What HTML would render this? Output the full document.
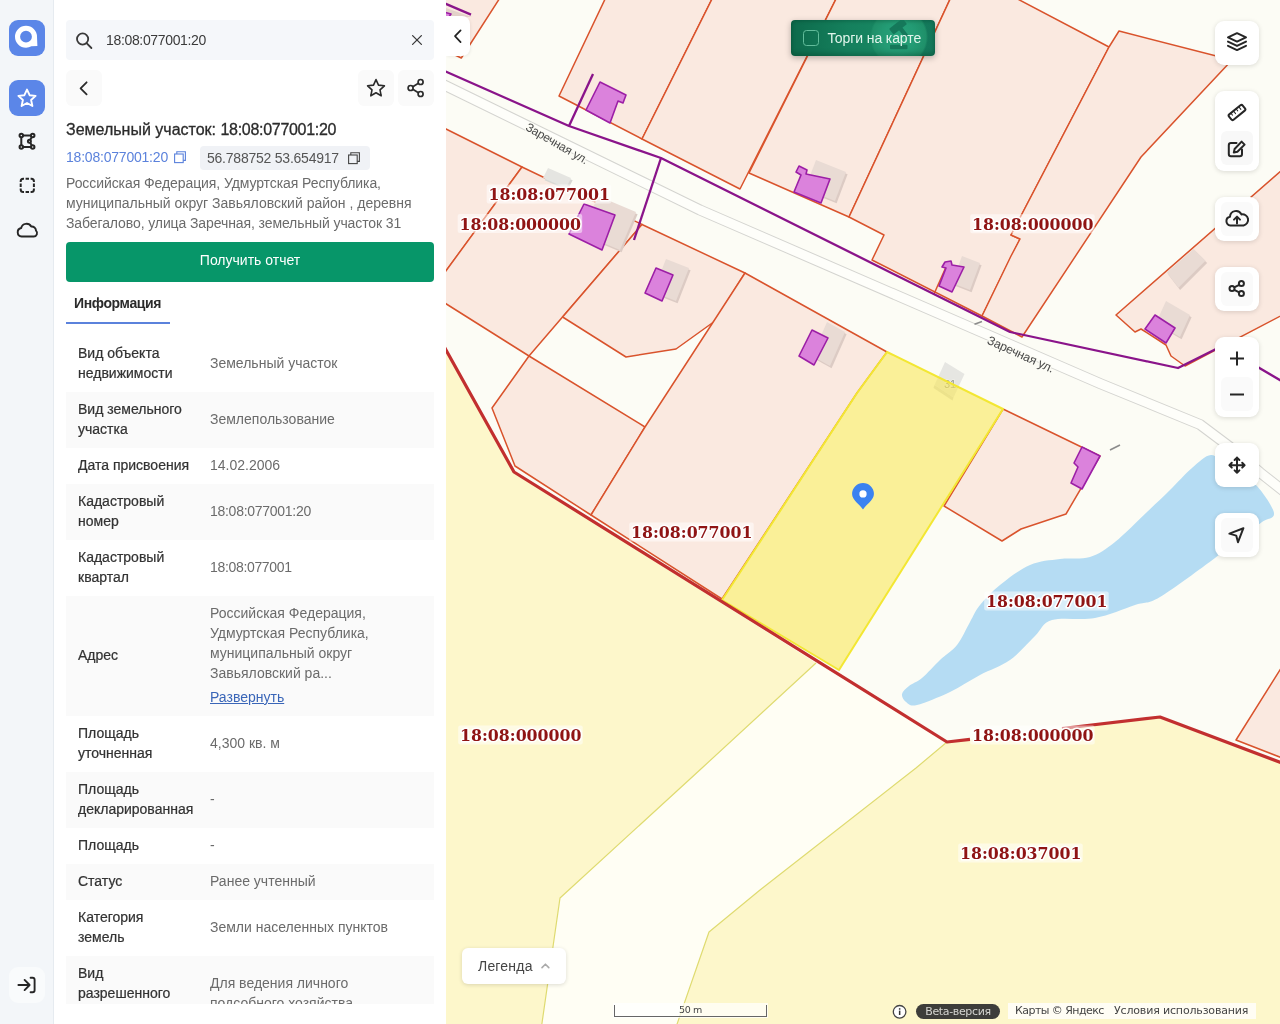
<!DOCTYPE html>
<html lang="ru">
<head>
<meta charset="utf-8">
<title>Земельный участок: 18:08:077001:20</title>
<style>
*{box-sizing:border-box;margin:0;padding:0}
html,body{width:1280px;height:1024px;overflow:hidden;background:#fff}
body{font-family:"Liberation Sans",sans-serif;font-size:14px;color:#333;position:relative}
.abs{position:absolute}
.gl{position:absolute;left:0;top:0;width:100%;height:100%;will-change:transform}
/* ---------- left rail ---------- */
#rail{position:absolute;left:0;top:0;width:54px;height:1024px;background:#f3f6f9;border-right:1px solid #e6ebf0}
.rbtn{position:absolute;left:9px;width:36px;height:36px;border-radius:9px}
.rbtn.blue{background:#5b86e8}
.rbtn svg{position:absolute;left:0;top:0}
/* ---------- panel ---------- */
#panel{position:absolute;left:54px;top:0;width:392px;height:1024px;background:#fff;overflow:hidden}
#search{position:absolute;left:12px;top:20px;width:368px;height:40px;background:#f5f7fa;border-radius:4px}
#search .q{position:absolute;left:40px;top:0;line-height:40px;font-size:14px;color:#3a3a3a;white-space:nowrap}
.sq{position:absolute;width:36px;height:36px;border-radius:6px;background:#fafafa}
.t{position:absolute;white-space:nowrap;transform-origin:0 50%}
#title{left:12px;top:119.5px;font-size:16px;line-height:20px;color:#2b2b2b;font-weight:normal;-webkit-text-stroke:.3px #2b2b2b}
#cn{left:12px;top:147px;line-height:20px;color:#5b82dc}
#chip{position:absolute;left:146px;top:146px;width:170px;height:24px;background:#f0f2f6;border-radius:4px}
#chip .t{left:7px;top:2px;line-height:20px;color:#555}
.addr{left:12px;color:#6b6b6b;line-height:20px}
#get{position:absolute;left:12px;top:242px;width:368px;height:40px;background:#079669;border-radius:4px;color:#fff;text-align:center;line-height:36px;font-size:14px}
#tab{letter-spacing:-.38px;left:20px;top:293px;line-height:20px;font-weight:bold;color:#2b2b2b}
#tabline{position:absolute;left:12px;top:322px;width:104px;height:2px;background:#5b82dc}
#rows{position:absolute;left:12px;top:336px;width:368px;height:668px;overflow:hidden}
.row{position:relative;width:368px;padding:7px 0 9px 0}
.row.g{background:#fafafa}
.row .l{position:absolute;left:12px;top:50%;transform:translateY(-50%);margin-top:-1px;width:130px;line-height:20px;color:#333;-webkit-text-stroke:.22px #333}
.row .v{margin-left:144px;line-height:20px;color:#6b6b6b;white-space:nowrap}
.row .l span,.row .v span{display:block;white-space:nowrap;transform-origin:0 50%}
a.more{color:#3a66b8;text-decoration:underline}
/* ---------- map ---------- */
#map{position:absolute;left:446px;top:0;width:834px;height:1024px;background:#fcfcf5;overflow:hidden}
#map svg.m{position:absolute;left:-446px;top:0}
.mbtn{position:absolute;left:769px;width:44px;background:#fff;border-radius:9px;box-shadow:0 1px 5px rgba(0,0,0,.14)}
.mbtn svg{position:absolute;left:0}
</style>
</head>
<body>
<!-- RAIL -->
<div id="rail">
  <div class="rbtn blue" style="top:20px"><svg width="36" height="36" viewBox="0 0 36 36"><path d="M17,5.7 A11,11 0 1 0 17,27.7 A11,11 0 0 0 22.4,26.3 L28.4,26 L28,16.7 A11,11 0 0 0 17,5.7 Z M17,10.8 A5.9,5.9 0 1 1 17,22.6 A5.9,5.9 0 1 1 17,10.8 Z" fill="#fff" fill-rule="evenodd"/></svg></div>
  <div class="rbtn blue" style="top:80px"><svg width="36" height="36" viewBox="0 0 36 36"><path d="M18,9.6 L20.6,15.2 L26.6,15.9 L22.1,20 L23.4,26 L18,23 L12.6,26 L13.9,20 L9.4,15.9 L15.4,15.2 Z" fill="none" stroke="#fff" stroke-width="1.9" stroke-linejoin="round"/></svg></div>
  <svg class="abs" style="left:9px;top:123px" width="36" height="36" viewBox="0 0 36 36" fill="none" stroke="#262626" stroke-width="2"><path d="M12.3,12.5 H23.7 L20.4,18.3 L23.7,23.9 H12.3 Z" stroke-linejoin="round"/><g fill="#f3f6f9"><circle cx="12.3" cy="12.5" r="1.75"/><circle cx="23.7" cy="12.5" r="1.75"/><circle cx="12.3" cy="23.9" r="1.75"/><circle cx="23.7" cy="23.9" r="1.75"/><circle cx="20.4" cy="18.3" r="1.5"/></g></svg>
  <svg class="abs" style="left:9px;top:167px" width="36" height="36" viewBox="0 0 36 36" fill="none" stroke="#262626" stroke-width="2" stroke-linecap="butt"><path d="M11.7,15 V14.2 A2.5,2.5 0 0 1 14.2,11.7 H15 M16.6,11.7 H20 M21.6,11.7 H22.4 A2.5,2.5 0 0 1 24.9,14.2 V15 M24.9,16.6 V20 M24.9,21.6 V22.4 A2.5,2.5 0 0 1 22.4,24.9 H21.6 M20,24.9 H16.6 M15,24.9 H14.2 A2.5,2.5 0 0 1 11.7,22.4 V21.6 M11.7,20 V16.6" stroke-dasharray="none"/></svg>
  <svg class="abs" style="left:9px;top:212px" width="36" height="36" viewBox="0 0 36 36" fill="none" stroke="#262626" stroke-width="1.9" stroke-linejoin="round"><path d="M12.6,24.5 A4.3,4.3 0 0 1 12.2,16 A5.4,5.4 0 0 1 22.2,14.6 A4.2,4.2 0 0 1 27,18.6 A3.4,3.4 0 0 1 24.6,24.5 Z"/></svg>
  <div class="rbtn" style="top:967px;background:#f9fbfc"><svg width="36" height="36" viewBox="0 0 36 36" fill="none" stroke="#262626" stroke-width="1.9" stroke-linecap="round" stroke-linejoin="round"><path d="M9.4,18 H20.4 M15.6,12.9 L20.6,18 L15.6,23.1"/><path d="M21.6,10.8 H23.6 A2,2 0 0 1 25.6,12.8 V23.2 A2,2 0 0 1 23.6,25.2 H21.6"/></svg></div>
</div>
<!-- PANEL -->
<div id="panel"><div class="gl">
  <div id="search"><svg class="abs" style="left:6px;top:8px" width="24" height="24" viewBox="0 0 24 24" fill="none" stroke="#3a3a3a" stroke-width="1.8" stroke-linecap="round"><circle cx="10.6" cy="11" r="5.6"/><path d="M14.8,15.3 L19.4,20"/></svg><span class="q" style="letter-spacing:-.34px">18:08:077001:20</span><svg class="abs" style="left:339px;top:8px" width="24" height="24" viewBox="0 0 24 24" fill="none" stroke="#3a3a3a" stroke-width="1.3" stroke-linecap="round"><path d="M7.6,7.6 L16.4,16.4 M16.4,7.6 L7.6,16.4"/></svg></div>
  <div class="sq" style="left:12px;top:70px"><svg width="36" height="36" viewBox="0 0 36 36" fill="none" stroke="#2b2b2b" stroke-width="1.8" stroke-linecap="round" stroke-linejoin="round"><path d="M20.6,12.3 L14.6,18.3 L20.6,24.3"/></svg></div>
  <div class="sq" style="left:304px;top:70px"><svg width="36" height="36" viewBox="0 0 36 36" fill="none" stroke="#2b2b2b" stroke-width="1.6" stroke-linejoin="round"><path d="M18,9.6 L20.5,15.1 L26.4,15.8 L22,19.9 L23.2,25.8 L18,22.8 L12.8,25.8 L14,19.9 L9.6,15.8 L15.5,15.1 Z"/></svg></div>
  <div class="sq" style="left:344px;top:70px"><svg width="36" height="36" viewBox="0 0 36 36" fill="none" stroke="#2b2b2b" stroke-width="1.7"><circle cx="22.6" cy="12" r="2.5"/><circle cx="12.6" cy="18" r="2.5"/><circle cx="22.6" cy="24" r="2.5"/><path d="M14.8,16.7 L20.4,13.3 M14.8,19.3 L20.4,22.7"/></svg></div>
  <div id="title" class="t">Земельный участок: <span style="letter-spacing:-.3px">18:08:077001:20</span></div>
  <div id="cn" class="t" style="letter-spacing:-.21px">18:08:077001:20</div><svg class="abs" style="left:118px;top:149px" width="16" height="16" viewBox="0 0 16 16" fill="none" stroke="#5b82dc" stroke-width="1.1"><rect x="2.6" y="5" width="8.6" height="8.6"/><path d="M4.8,5 V2.8 H13.4 V11.4 H11.2"/></svg>
  <div id="chip"><span class="t" style="letter-spacing:-.23px">56.788752 53.654917</span><svg class="abs" style="left:146px;top:4px" width="16" height="16" viewBox="0 0 16 16" fill="none" stroke="#444" stroke-width="1.1"><rect x="2.6" y="5" width="8.6" height="8.6"/><path d="M4.8,5 V2.8 H13.4 V11.4 H11.2"/></svg></div>
  <div class="t addr" style="top:173px;letter-spacing:-.08px">Российская Федерация, Удмуртская Республика,</div>
  <div class="t addr" style="top:193px">муниципальный округ Завьяловский район , деревня</div>
  <div class="t addr" style="top:213px;letter-spacing:-.1px">Забегалово, улица Заречная, земельный участок 31</div>
  <div id="get"><span class="t" style="position:static;display:inline-block">Получить отчет</span></div>
  <div id="tab" class="t">Информация</div>
  <div id="tabline"></div>
  <div id="rows">
<div class="row" style="height:56px"><div class="l"><span>Вид объекта</span><span>недвижимости</span></div><div class="v" style="padding-top:10px"><span>Земельный участок</span></div></div>
<div class="row g" style="height:56px"><div class="l"><span>Вид земельного</span><span>участка</span></div><div class="v" style="padding-top:10px"><span>Землепользование</span></div></div>
<div class="row" style="height:36px"><div class="l"><span>Дата присвоения</span></div><div class="v" style="padding-top:0px"><span>14.02.2006</span></div></div>
<div class="row g" style="height:56px"><div class="l"><span>Кадастровый</span><span>номер</span></div><div class="v" style="padding-top:10px"><span style="letter-spacing:-.28px">18:08:077001:20</span></div></div>
<div class="row" style="height:56px"><div class="l"><span>Кадастровый</span><span>квартал</span></div><div class="v" style="padding-top:10px"><span style="letter-spacing:-.33px">18:08:077001</span></div></div>
<div class="row g" style="height:120px"><div class="l"><span>Адрес</span></div><div class="v" style="padding-top:0px"><span>Российская Федерация,</span><span>Удмуртская Республика,</span><span>муниципальный округ</span><span>Завьяловский ра...</span><span style="margin-top:4px"><a class="more">Развернуть</a></span></div></div>
<div class="row" style="height:56px"><div class="l"><span>Площадь</span><span>уточненная</span></div><div class="v" style="padding-top:10px"><span>4,300 кв. м</span></div></div>
<div class="row g" style="height:56px"><div class="l"><span>Площадь</span><span>декларированная</span></div><div class="v" style="padding-top:10px"><span>-</span></div></div>
<div class="row" style="height:36px"><div class="l"><span>Площадь</span></div><div class="v" style="padding-top:0px"><span>-</span></div></div>
<div class="row g" style="height:36px"><div class="l"><span>Статус</span></div><div class="v" style="padding-top:0px"><span>Ранее учтенный</span></div></div>
<div class="row" style="height:56px"><div class="l"><span>Категория</span><span>земель</span></div><div class="v" style="padding-top:10px"><span>Земли населенных пунктов</span></div></div>
<div class="row g" style="height:76px"><div class="l"><span>Вид</span><span>разрешенного</span><span>использования</span></div><div class="v" style="padding-top:10px"><span>Для ведения личного</span><span>подсобного хозяйства</span></div></div>
</div>
</div></div>
<!-- MAP -->
<div id="map"><div class="gl">
<svg class="m" width="1280" height="1024" viewBox="0 0 1280 1024">
  <defs>
    <filter id="halo" x="-5%" y="-20%" width="110%" height="140%"><feGaussianBlur stdDeviation="0.6"/></filter>
  </defs>
  <!-- water -->
  <path id="water" fill="#b5dcf3" d="M902.0,694.0 C902.5,691.3 905.7,688.7 909.0,686.0 C912.3,683.3 916.8,682.3 922.0,678.0 C927.2,673.7 934.2,665.5 940.0,660.0 C945.8,654.5 952.0,651.3 957.0,645.0 C962.0,638.7 966.2,628.7 970.0,622.0 C973.8,615.3 975.0,611.2 980.0,605.0 C985.0,598.8 991.7,591.7 1000.0,585.0 C1008.3,578.3 1020.0,569.3 1030.0,565.0 C1040.0,560.7 1050.0,560.3 1060.0,559.0 C1070.0,557.7 1080.8,559.8 1090.0,557.0 C1099.2,554.2 1105.5,549.5 1115.0,542.0 C1124.5,534.5 1137.8,520.7 1147.0,512.0 C1156.2,503.3 1162.5,497.3 1170.0,490.0 C1177.5,482.7 1185.2,473.8 1192.0,468.0 C1198.8,462.2 1205.3,455.3 1211.0,455.0 C1216.7,454.7 1220.8,462.2 1226.0,466.0 C1231.2,469.8 1236.8,474.7 1242.0,478.0 C1247.2,481.3 1251.7,480.2 1257.0,486.0 C1262.3,491.8 1273.2,507.0 1274.0,513.0 C1274.8,519.0 1267.7,517.8 1262.0,522.0 C1256.3,526.2 1247.8,532.0 1240.0,538.0 C1232.2,544.0 1228.3,548.2 1215.0,558.0 C1201.7,567.8 1173.3,589.2 1160.0,597.0 C1146.7,604.8 1145.8,601.5 1135.0,605.0 C1124.2,608.5 1108.8,615.5 1095.0,618.0 C1081.2,620.5 1062.0,617.0 1052.0,620.0 C1042.0,623.0 1042.0,629.3 1035.0,636.0 C1028.0,642.7 1019.2,653.5 1010.0,660.0 C1000.8,666.5 990.0,669.7 980.0,675.0 C970.0,680.3 960.5,687.0 950.0,692.0 C939.5,697.0 924.3,703.3 917.0,705.0 C909.7,706.7 908.5,703.8 906.0,702.0 C903.5,700.2 901.5,696.7 902.0,694.0 Z"/>
  <!-- road -->
  <g fill="none" stroke-linejoin="round" stroke-linecap="butt">
    <path id="rd" d="M436,81 L700,210 L1100,383.5 L1200,424.5 L1230,447 L1260,472.5 L1290,496" stroke="#d4d4d0" stroke-width="11"/>
    <path d="M436,81 L700,210 L1100,383.5 L1200,424.5 L1230,447 L1260,472.5 L1290,496" stroke="#fefefa" stroke-width="9"/>
  </g>
  <!-- yellow quarter areas -->
  <g fill="#fdf7cb">
    <polygon points="440,340 446,350 514,472 816,663 702,768 560,898 541,1030 440,1030"/>
    <polygon points="947,742 1160,717 1290,766 1290,1030 675,1030 709,932 760,890 916,768"/>
  </g>
  <polygon points="816,663 947,742 916,768 760,890 709,932 675,1030 541,1030 560,898 702,768" fill="#fffef4"/>
  <g fill="none" stroke="#dfdb70" stroke-width="1.2" stroke-linejoin="round">
    <polyline points="816,663 702,768 560,898 541,1030"/>
    <polyline points="947,742 916,768 760,890 709,932 675,1030"/>
  </g>
  <!-- parcels -->
  <g id="parcels" fill="#fae9e0" stroke="#d9532c" stroke-width="1.5" stroke-linejoin="round">
    <polygon points="440,-5 501.8,-5 461.3,58 440,48"/>
    <polygon points="607,-5 714,-5 642,139 559,96"/>
    <polygon points="714,-5 838,-5 740,189 642,139"/>
    <polygon points="838,-5 952,-5 849,217 749,173"/>
    <polygon points="952,-5 1010,-5 1109,47 1011,235 1020,239 982,316 872,260 884,235 849,217"/>
    <polygon points="1119,31 1232,60 1141,157 1022,337 982,316 1011,256 1020,239 1011,235 1109,47"/>
    <polygon points="1290,163 1116,315 1135,332 1141,329 1166,345 1171,356 1185,366 1290,311"/>
    <polygon points="440,126 522,167 446,271 440,271"/>
    <polygon points="522,167 642,224.5 529,356 440,300 440,279"/>
    <polygon points="642,224.5 745,273 715,321 676,349 626,357 562.6,317"/>
    <polygon points="529,356 645,427 591,515 515,466 492,408"/>
    <polygon points="745,273 887,352 857,393 722,599 591,515 645,427"/>
    <polygon points="1003,409 1100,456 1066,514 1021,529 1002,541 944,506"/>
    <polygon points="1290,654 1236,740 1290,761"/>
    <line x1="946" y1="267" x2="934" y2="294"/>
  </g>
  <!-- yandex buildings -->
  <g fill="#dccbc4" transform="translate(1.6,2.2)">
    <polygon points="548,168 571,178 566,188 543,178" fill="#d8d8d4"/>
    <polygon points="598,196 636,212 620,250 582,234"/>
    <polygon points="816,160 846,172 835,201 805,189"/>
    <polygon points="666,259 689,268 676,301 653,292"/>
    <polygon points="962,256 980,263 970,290 952,283"/>
    <polygon points="827,322 845,332 830,366 812,356"/>
    <polygon points="1166.8,272.5 1193.7,249 1205.5,260.8 1178.5,287.7"/>
    <polygon points="1166,301 1190,315 1180,337 1156,323"/>
  </g>
  <g fill="#e9dbd4">
    <polygon points="548,168 571,178 566,188 543,178" fill="#e5e5e1"/>
    <polygon points="598,196 636,212 620,250 582,234"/>
    <polygon points="816,160 846,172 835,201 805,189"/>
    <polygon points="666,259 689,268 676,301 653,292"/>
    <polygon points="962,256 980,263 970,290 952,283"/>
    <polygon points="827,322 845,332 830,366 812,356"/>
    <polygon points="1166.8,272.5 1193.7,249 1205.5,260.8 1178.5,287.7"/>
    <polygon points="1166,301 1190,315 1180,337 1156,323"/>
  </g>
  <polygon points="440,6 472,17 440,17" fill="#e3d2ca"/>
  <!-- highlighted parcel -->
  <polygon points="945,362 964.5,374 953.5,397.5 934.5,385" fill="#e6e6e2"/>
  <polygon points="934.5,385 953.5,397.5 952.5,400.5 933.5,388" fill="#d9d9d5"/>
  <text x="950" y="388" font-family="Liberation Sans, sans-serif" font-size="11" fill="#96968c" stroke="#efefe9" stroke-width="1.5" paint-order="stroke" text-anchor="middle">31</text>
  <polygon points="887,352 1003,409 839,670 722,600 857,393" fill="#f9e85a" fill-opacity=".6" stroke="#f3e733" stroke-width="2" stroke-linejoin="round"/>
  <!-- rosreestr buildings -->
  <g fill="#db82dc" stroke="#9c1fa6" stroke-width="1.6" stroke-linejoin="round">
    <polygon points="440,11 451,14 449,17 440,17"/>
    <polygon points="600,82 626,95 623,103 618,101 610,123 586,110"/>
    <polygon points="584,204 615,215 602,250 569,234"/>
    <polygon points="799,166 807,170 806,174 830,179 821,203 794,192 801,175 796,172"/>
    <polygon points="656,268 673,275 662,301 645,293"/>
    <polygon points="945,262 951,261 952,265 964,267 952,292 939,286 946,268 942,267"/>
    <polygon points="812,330 828,338 814,365 799,356"/>
    <polygon points="1082,447 1100,456 1082,489 1071,483 1078,467 1074,463"/>
    <polygon points="1155,315 1175,328 1166,343 1145,329"/>
  </g>
  <!-- purple zone lines -->
  <g fill="none" stroke="#8a148a" stroke-width="2.3" stroke-linejoin="round">
    <polyline points="440,69 569,126 661,158 1010,332 1178,368 1222,346 1290,386"/>
    <line x1="569" y1="126" x2="593" y2="74"/>
    <line x1="661" y1="158" x2="634" y2="240"/>
    <line x1="440" y1="1.4" x2="471" y2="14.6"/>
  </g>
  <!-- quarter boundary -->
  <g fill="none" stroke="#c22f2f" stroke-width="3.2" stroke-linejoin="round"><polyline points="440,339 446,350 514,472 947,742 970,739.3"/><polyline points="1062,728.5 1160,717 1290,766"/></g>
  <!-- small dashes -->
  <g stroke="#8c8c8c" stroke-width="1.6"><line x1="974.5" y1="324.2" x2="982" y2="321.4"/><line x1="1110" y1="450" x2="1120" y2="445"/></g>
  <!-- street labels -->
  <g font-family="Liberation Sans, sans-serif" font-size="12" letter-spacing="-.2" fill="#4a4a4a" stroke="#fcfcf5" stroke-width="2.5" paint-order="stroke" text-anchor="middle">
    <text transform="translate(555,147) rotate(30)">Заречная ул.</text>
    <text transform="translate(1019,358) rotate(24.5)" font-size="12.3">Заречная ул.</text>
  </g>
  <!-- cadastral labels -->
  <g fill="#ffffff" fill-opacity=".5" filter="url(#halo)"><rect x="486.7" y="184.5" width="124.5" height="19" rx="2"/><rect x="457.7" y="214.1" width="124.5" height="19" rx="2"/><rect x="970.2" y="214.3" width="124.5" height="19" rx="2"/><rect x="629.2" y="522.5" width="124.5" height="19" rx="2"/><rect x="984.2" y="591.5" width="124.5" height="19" rx="2"/><rect x="458.2" y="725.5" width="124.5" height="19" rx="2"/><rect x="970.2" y="725.5" width="124.5" height="19" rx="2"/><rect x="958.2" y="843.5" width="124.5" height="19" rx="2"/></g>
  <g font-family="DejaVu Serif, Liberation Serif, serif" font-weight="bold" font-size="15.8" fill="#8f1414" stroke="#ffffff" stroke-width="3" stroke-linejoin="round" paint-order="stroke">
    <text x="488.5" y="200">18:08:077001</text>
    <text x="459.5" y="229.6">18:08:000000</text>
    <text x="972" y="229.8">18:08:000000</text>
    <text x="631" y="538">18:08:077001</text>
    <text x="986" y="607">18:08:077001</text>
    <text x="460" y="741">18:08:000000</text>
    <text x="972" y="741">18:08:000000</text>
    <text x="960" y="859">18:08:037001</text>
  </g>
  <!-- marker -->
  <g transform="translate(863,495) scale(1.04)">
    <path d="M0,14 C-3,9 -10.5,5 -10.5,-1 A10.5,10.5 0 1 1 10.5,-1 C10.5,5 3,9 0,14 Z" fill="#3b82f0"/>
    <circle cx="0" cy="-1" r="3.5" fill="#fff"/>
  </g>
</svg>
<!-- map overlays -->
<div class="abs" style="left:0;top:16px;width:24px;height:40px;background:#fff;border-radius:0 8px 8px 0;box-shadow:1px 1px 3px rgba(0,0,0,.06)"><svg width="24" height="40" viewBox="0 0 24 40" fill="none" stroke="#222" stroke-width="1.7" stroke-linecap="round" stroke-linejoin="round"><path d="M14.6,14.3 L9,20.2 L14.6,26.1"/></svg></div>
<div id="torgi" class="abs" style="left:345px;top:20px;width:144px;height:36px;border-radius:4px;background:radial-gradient(circle 29px at 108px 17px,#27a27a 0,#239b74 55%,#1f9069 93%,rgba(31,144,105,0) 100%),linear-gradient(90deg,#0d6a4b 0,#15805d 40%,#178661 62%,#13775a 100%);box-shadow:0 2px 6px rgba(0,0,0,.28),inset 0 -3px 4px rgba(0,45,28,.28),inset 0 2px 3px rgba(0,45,28,.18);overflow:hidden">
  <svg class="abs" style="left:84px;top:0" width="60" height="36" viewBox="0 0 60 36" fill="#15785a"><rect x="-8.5" y="-3.6" width="17" height="7.2" rx="1" transform="translate(23,6.5) rotate(-38)"/><rect x="-2" y="-1" width="4.2" height="13" transform="translate(24.5,7.5) rotate(-38)"/><rect x="15" y="24.8" width="17.5" height="4.4" rx="1"/></svg>
  <div class="abs" style="left:12px;top:10px;width:16px;height:16px;border:1px solid #62bd9b;border-radius:3.5px"></div>
  <div class="t" style="left:36.5px;top:8px;line-height:20px;color:#e0f5eb;font-size:14px;letter-spacing:-.1px">Торги на карте</div>
</div>
<div class="mbtn" style="top:21px;height:44px"><svg width="44" height="44" viewBox="0 0 44 44" fill="none" stroke="#262626" stroke-width="2" stroke-linejoin="round" stroke-linecap="round"><path d="M13,16.4 L22,12.2 L31,16.4 L22,20.6 Z"/><path d="M13,20.6 L22,24.9 L31,20.6"/><path d="M13,24.8 L22,29.1 L31,24.8"/></svg></div>
<div class="mbtn" style="top:91px;height:80px"><div class="abs" style="left:6px;top:40px;width:32px;height:34px;background:#f8f8f8;border-radius:6px"></div><svg width="44" height="80" viewBox="0 0 44 80" fill="none" stroke="#262626" stroke-width="2" stroke-linejoin="round" stroke-linecap="round"><g transform="translate(22,21.5) rotate(-39)"><rect x="-8.8" y="-3.4" width="17.6" height="6.8" rx="1.6"/><path d="M-5.2,-3.2 v2.4 M-1.8,-3.2 v3.2 M1.6,-3.2 v2.4 M5,-3.2 v3.2" stroke-width="1"/></g><path d="M21.5,52 H16 A2.2,2.2 0 0 0 13.8,54.2 V63 A2.2,2.2 0 0 0 16,65.2 H24.8 A2.2,2.2 0 0 0 27,63 V58.5"/><path d="M26.6,50.6 L29.6,53.6 L22.4,60.8 L18.8,61.6 L19.6,58 Z"/></svg></div>
<div class="mbtn" style="top:197px;height:44px"><div class="abs" style="left:6px;top:5px;width:32px;height:34px;background:#fafafa;border-radius:6px"></div><svg width="44" height="44" viewBox="0 0 44 44" fill="none" stroke="#262626" stroke-width="2" stroke-linejoin="round" stroke-linecap="round"><path d="M15.4,28.4 A4.4,4.4 0 0 1 15,19.7 A6,6 0 0 1 26.4,17.4 A5.5,5.5 0 0 1 28.6,28.4 Z"/><path d="M22,26.6 V19.8 M19,22.6 L22,19.6 L25,22.6"/></svg></div>
<div class="mbtn" style="top:267px;height:44px"><div class="abs" style="left:6px;top:5px;width:32px;height:34px;background:#fafafa;border-radius:6px"></div><svg width="44" height="44" viewBox="0 0 44 44" fill="none" stroke="#262626" stroke-width="2"><circle cx="26.4" cy="16.6" r="2.5"/><circle cx="17" cy="21.6" r="2.5"/><circle cx="26.4" cy="26.6" r="2.5"/><path d="M19.2,20.4 L24.2,17.8 M19.2,22.8 L24.2,25.4"/></svg></div>
<div class="mbtn" style="top:337px;height:80px"><div class="abs" style="left:6px;top:40px;width:32px;height:34px;background:#fafafa;border-radius:6px"></div><svg width="44" height="80" viewBox="0 0 44 80" fill="none" stroke="#262626" stroke-width="2" stroke-linecap="butt"><path d="M15,21.5 H29 M22,14.5 V28.5 M15,57.5 H29"/></svg></div>
<div class="mbtn" style="top:443px;height:44px"><svg width="44" height="44" viewBox="0 0 44 44" fill="none" stroke="#262626" stroke-width="2" stroke-linejoin="round" stroke-linecap="round"><path d="M14.4,22.2 H29.6 M22,14.6 V29.8 M19.6,17 L22,14.6 L24.4,17 M19.6,27.4 L22,29.8 L24.4,27.4 M16.8,19.8 L14.4,22.2 L16.8,24.6 M27.2,19.8 L29.6,22.2 L27.2,24.6"/></svg></div>
<div class="mbtn" style="top:513px;height:44px"><div class="abs" style="left:6px;top:5px;width:32px;height:34px;background:#fafafa;border-radius:6px"></div><svg width="44" height="44" viewBox="0 0 44 44" fill="none" stroke="#262626" stroke-width="2" stroke-linejoin="round"><path d="M28.4,15.2 L14.4,20.6 L21.2,22.6 L23,29.2 Z"/></svg></div>
<div class="abs" style="left:16px;top:948px;width:104px;height:36px;background:#fff;border-radius:6px;box-shadow:0 1px 4px rgba(0,0,0,.14)"><div class="t" style="left:16px;top:8px;line-height:20px;color:#444;font-size:14px;letter-spacing:.2px">Легенда</div><svg class="abs" style="left:76px;top:12px" width="14" height="12" viewBox="0 0 14 12" fill="none" stroke="#aaa" stroke-width="1.6" stroke-linecap="round" stroke-linejoin="round"><path d="M4,7.6 L7.4,4.2 L10.8,7.6"/></svg></div>
<div class="abs" style="left:167px;top:1003px;width:155px;height:15px;background:rgba(255,255,255,.7)"></div>
<div class="abs" style="left:168px;top:1005px;width:153px;height:12px;border:1px solid #666;border-top:none"></div>
<div class="abs" style="left:168px;top:1003px;width:153px;height:14px;line-height:14px;text-align:center;font-family:'DejaVu Sans','Liberation Sans',sans-serif;font-size:9.5px;color:#444;letter-spacing:-.3px">50 m</div>
<svg class="abs" style="left:445px;top:1003px" width="18" height="18" viewBox="0 0 18 18"><circle cx="8.6" cy="8.8" r="6.3" fill="#fff" stroke="#444" stroke-width="1.3"/><rect x="7.9" y="7.6" width="1.5" height="4.4" fill="#333"/><rect x="7.9" y="5.2" width="1.5" height="1.5" fill="#333"/></svg>
<div class="abs" style="left:470px;top:1004px;width:84px;height:15px;border-radius:8px;background:#3d3d3a;color:#d4d4d0;font-family:'DejaVu Sans','Liberation Sans',sans-serif;font-size:11px;line-height:15px;text-align:center;letter-spacing:-.35px">Beta-версия</div>
<div class="abs" style="left:562px;top:1003px;width:248px;height:16px;background:rgba(255,255,255,.78);font-family:'DejaVu Sans','Liberation Sans',sans-serif;font-size:11px;line-height:16px;color:#444;white-space:nowrap;letter-spacing:-.3px"><span class="abs" style="left:7px;letter-spacing:-.55px">Карты © Яндекс</span><span class="abs" style="left:106px;letter-spacing:-.16px">Условия использования</span></div>
</div>
</div>
</body>
</html>
